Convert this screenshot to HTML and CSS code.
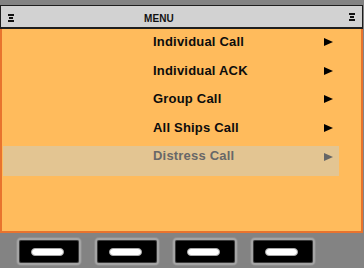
FILE: index.html
```html
<!DOCTYPE html>
<html>
<head>
<meta charset="utf-8">
<link rel="stylesheet" href="styles.css">
</head>
<body>
<div class="screen">
  <div class="header">
    <svg class="xi xi-left" width="6" height="8" viewBox="0 0 6 8"><rect x="0" y="0" width="6" height="2"/><rect x="1" y="3" width="4" height="2"/><rect x="0" y="6" width="6" height="2"/></svg>
    <span class="title">MENU</span>
    <svg class="xi xi-right" width="6" height="8" viewBox="0 0 6 8"><rect x="0" y="0" width="6" height="2"/><rect x="1" y="3" width="4" height="2"/><rect x="0" y="6" width="6" height="2"/></svg>
  </div>
  <div class="panel">
    <ul class="menu">
      <li class="item"><span class="label">Individual Call</span><svg class="arrow" width="9" height="8" viewBox="0 0 9 8"><polygon points="0,0 9,4 0,8"/></svg></li>
      <li class="item"><span class="label">Individual ACK</span><svg class="arrow" width="9" height="8" viewBox="0 0 9 8"><polygon points="0,0 9,4 0,8"/></svg></li>
      <li class="item"><span class="label">Group Call</span><svg class="arrow" width="9" height="8" viewBox="0 0 9 8"><polygon points="0,0 9,4 0,8"/></svg></li>
      <li class="item"><span class="label">All Ships Call</span><svg class="arrow" width="9" height="8" viewBox="0 0 9 8"><polygon points="0,0 9,4 0,8"/></svg></li>
      <li class="item selected"><span class="label">Distress Call</span><svg class="arrow" width="9" height="8" viewBox="0 0 9 8"><polygon points="0,0 9,4 0,8"/></svg></li>
    </ul>
  </div>
  <div class="softkeys">
    <div class="key"><span class="pill"></span></div>
    <div class="key"><span class="pill"></span></div>
    <div class="key"><span class="pill"></span></div>
    <div class="key"><span class="pill"></span></div>
  </div>
</div>
</body>
</html>
```
FILE: styles.css
```css
html, body {
  margin: 0;
  padding: 0;
  background: #838383;
  width: 364px;
  height: 268px;
  overflow: hidden;
  font-family: "Liberation Sans", Arial, sans-serif;
}
.screen {
  width: 363px;
  padding-top: 5px;
}
.header {
  height: 21px;
  background: #d2d2d2;
  border: 1px solid #1e1e1e;
  border-bottom-width: 2px;
  display: flex;
  align-items: center;
  position: relative;
}
.xi {
  fill: #111;
  flex: none;
}
.xi-left {
  margin-left: 7px;
  margin-top: 2px;
}
.xi-right {
  margin-left: auto;
  margin-right: 7px;
  margin-top: 1px;
}
.title {
  margin-left: 130px;
  margin-top: 3px;
  font-size: 10px;
  font-weight: bold;
  color: #111;
  letter-spacing: 0.1px;
}
.panel {
  height: 202px;
  background: #ffbb5c;
  border: 2px solid #e8732e;
  border-top: none;
  border-bottom-width: 2px;
}
.menu {
  list-style: none;
  margin: 0;
  padding: 3px 0 0 0;
}
.item {
  height: 28.5px;
  box-sizing: border-box;
  padding-top: 2px;
  margin-left: 1px;
  width: 336px;
  display: flex;
  align-items: flex-start;
  padding-left: 150px;
  color: #0c0c0c;
}
.label {
  font-size: 13px;
  font-weight: bold;
  line-height: 15px;
  letter-spacing: 0.2px;
}
.arrow {
  margin-left: auto;
  margin-right: 6px;
  margin-top: 4px;
  fill: #000;
}
.selected {
  height: 30px;
  background: #e3c592;
  color: #686868;
}
.selected .arrow {
  fill: #666;
  margin-top: 5px;
}
.softkeys {
  display: flex;
  gap: 14px;
  padding-left: 17px;
  padding-top: 5px;
}
.key {
  height: 23px;
  background: #000;
  border: 2px solid #a4a4a4;
  border-radius: 4px;
  box-shadow: 0 0 0 1px #8e8e8e, inset 0 0 0 1px #3a3a3a;
  display: flex;
  align-items: center;
  padding-left: 12px;
  box-sizing: content-box;
  width: 48px;
}
.pill {
  width: 31px;
  height: 6px;
  background: #fff;
  border: 1px solid #a8a8a8;
  border-radius: 4px;
}
```
